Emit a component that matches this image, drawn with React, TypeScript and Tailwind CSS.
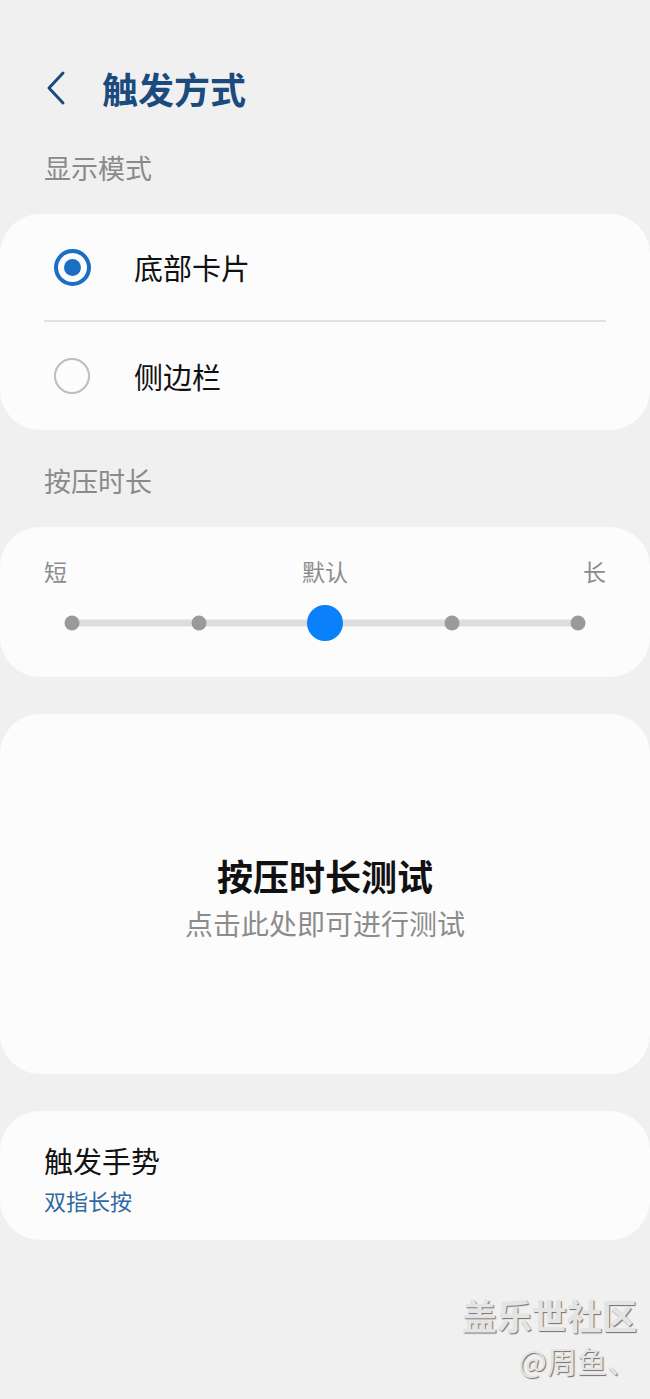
import React, { useState } from 'react';

const durations = ['短', '', '默认', '', '长'];

function Radio({ checked }: { checked: boolean }) {
  if (checked) {
    return (
      <span className="w-[37px] h-[37px] rounded-full border-[4px] border-[#1a6fc4] flex items-center justify-center">
        <span className="w-[17px] h-[17px] rounded-full bg-[#1a6fc4]" />
      </span>
    );
  }
  return <span className="w-[36px] h-[36px] rounded-full border-[2.5px] border-[#bdbdbd]" />;
}

export default function App() {
  const [mode, setMode] = useState<'card' | 'side'>('card');
  const [level, setLevel] = useState(2);

  const stops = ['left-0', 'left-1/4', 'left-1/2', 'left-3/4', 'left-full'];

  return (
    <div className="min-h-[1399px] bg-[#f0f0f0] font-['Noto_Sans_CJK_SC','Noto_Sans',sans-serif] text-[#111]">
      {/* Header */}
      <div className="pt-[60px] h-[116px] flex items-center pl-[44px]">
        <svg width="24" height="36" viewBox="0 0 24 36" className="shrink-0">
          <polyline points="19,3 5,18 19,33" fill="none" stroke="#1b4a7e" strokeWidth="3" strokeLinecap="round" strokeLinejoin="round" />
        </svg>
        <h1 className="ml-[34px] text-[36px] leading-[48px] font-bold text-[#1b4a7e]">触发方式</h1>
      </div>

      {/* Display mode */}
      <div className="mt-[34px] px-[44px] text-[27px] leading-[36px] text-[#8a8a8a]">显示模式</div>
      <div className="mt-[28px] bg-[#fcfcfc] rounded-[40px]">
        <button
          className="w-full h-[106px] flex items-center pl-[54px] text-left"
          onClick={() => setMode('card')}
        >
          <Radio checked={mode === 'card'} />
          <span className="ml-[43px] text-[29px] leading-[36px]">底部卡片</span>
        </button>
        <div className="mx-[44px] h-[2px] bg-[#e2e2e2]" />
        <button
          className="w-full h-[108px] flex items-center pl-[54px] text-left"
          onClick={() => setMode('side')}
        >
          <Radio checked={mode === 'side'} />
          <span className="ml-[44px] text-[29px] leading-[36px]">侧边栏</span>
        </button>
      </div>

      {/* Press duration */}
      <div className="mt-[33px] px-[44px] text-[27px] leading-[36px] text-[#8a8a8a]">按压时长</div>
      <div className="mt-[28px] bg-[#fcfcfc] rounded-[40px] pt-[26px] pb-[36px]">
        <div className="px-[44px] flex justify-between text-[23px] leading-[36px] text-[#8c8c8c]">
          <span>{durations[0]}</span>
          <span>{durations[2]}</span>
          <span>{durations[4]}</span>
        </div>
        <div className="mt-[16px] mx-[72px] relative h-[36px]">
          <div className="absolute left-0 right-0 top-1/2 -translate-y-1/2 h-[7px] bg-[#dddddd]" />
          {stops.map((cls, i) => (
            <button
              key={i}
              onClick={() => setLevel(i)}
              className={`absolute top-1/2 -translate-x-1/2 -translate-y-1/2 ${cls}`}
            >
              {i === level ? (
                <span className="block w-[36px] h-[36px] rounded-full bg-[#0a80fb]" />
              ) : (
                <span className="block w-[15px] h-[15px] rounded-full bg-[#9a9a9a]" />
              )}
            </button>
          ))}
        </div>
      </div>

      {/* Test area */}
      <div className="mt-[37px] h-[360px] bg-[#fcfcfc] rounded-[40px] flex flex-col items-center justify-center pt-[3px]">
        <div className="text-[36px] leading-[48px] font-bold text-[#111]">按压时长测试</div>
        <div className="mt-[6px] text-[28px] leading-[36px] text-[#8c8c8c]">点击此处即可进行测试</div>
      </div>

      {/* Gesture */}
      <div className="mt-[37px] bg-[#fcfcfc] rounded-[40px] pt-[31px] pb-[25px] px-[44px]">
        <div className="text-[29px] leading-[36px]">触发手势</div>
        <div className="mt-[7px] text-[22px] leading-[30px] text-[#2f69a3]">双指长按</div>
      </div>

      {/* Watermark */}
      <div className="mt-[53px] pr-[13px] flex flex-col items-end text-[#e4e4e4] font-bold [text-shadow:1px_1px_1px_#6e6e6e]">
        <div className="text-[35px] leading-[44px]">盖乐世社区</div>
        <div className="mt-[5px] text-[30px] leading-[36px] font-normal">@周鱼、</div>
      </div>
    </div>
  );
}
